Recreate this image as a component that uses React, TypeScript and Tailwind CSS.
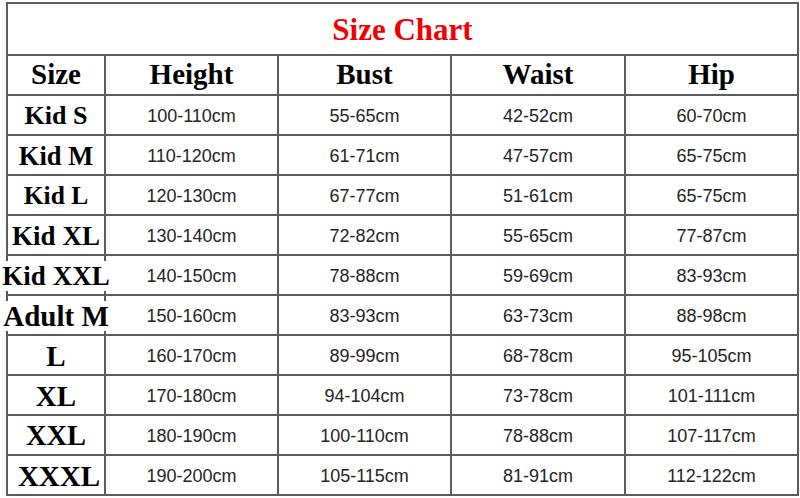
import React from 'react';

type Row = {
    size: string;
    sizeClass: string;
    height: string;
    bust: string;
    waist: string;
    hip: string;
};

const rows: Row[] = [
    { size: 'Kid S', sizeClass: 'text-[26px]', height: '100-110cm', bust: '55-65cm', waist: '42-52cm', hip: '60-70cm' },
    { size: 'Kid M', sizeClass: 'text-[26.5px]', height: '110-120cm', bust: '61-71cm', waist: '47-57cm', hip: '65-75cm' },
    { size: 'Kid L', sizeClass: 'text-[25.5px]', height: '120-130cm', bust: '67-77cm', waist: '51-61cm', hip: '65-75cm' },
    { size: 'Kid XL', sizeClass: 'text-[27px]', height: '130-140cm', bust: '72-82cm', waist: '55-65cm', hip: '77-87cm' },
    { size: 'Kid XXL', sizeClass: 'text-[27px]', height: '140-150cm', bust: '78-88cm', waist: '59-69cm', hip: '83-93cm' },
    { size: 'Adult M', sizeClass: 'text-[29px]', height: '150-160cm', bust: '83-93cm', waist: '63-73cm', hip: '88-98cm' },
    { size: 'L', sizeClass: 'text-[29px]', height: '160-170cm', bust: '89-99cm', waist: '68-78cm', hip: '95-105cm' },
    { size: 'XL', sizeClass: 'text-[29px]', height: '170-180cm', bust: '94-104cm', waist: '73-78cm', hip: '101-111cm' },
    { size: 'XXL', sizeClass: 'text-[28.5px]', height: '180-190cm', bust: '100-110cm', waist: '78-88cm', hip: '107-117cm' },
    { size: 'XXXL', sizeClass: 'text-[29px] pl-[6px]', height: '190-200cm', bust: '105-115cm', waist: '81-91cm', hip: '112-122cm' },
];

const serif = "font-['Liberation_Serif','Times_New_Roman',serif] font-bold";
const sans = "font-['Liberation_Sans',Arial,sans-serif]";

function DataCell({ value }: { value: string }) {
    return (
        <div className={`bg-white flex items-center justify-center pt-[3px] text-[18px] text-[#242424] ${sans}`}>
            {value}
        </div>
    );
}

export default function App() {
    return (
        <div className="w-[800px] h-[498px] bg-white pt-[2px] pl-[6px]">
            <div className="grid w-[793px] grid-cols-[96px_171px_171px_172px_171px] grid-rows-[50px_repeat(11,38px)] gap-[2px] p-[2px] bg-[#5c5c5c]">
                <div className={`col-span-5 bg-white flex items-center justify-center text-[31px] text-[#f00000] pt-[2px] ${serif}`}>
                    Size Chart
                </div>

                {['Size', 'Height', 'Bust', 'Waist', 'Hip'].map(h => (
                    <div key={h} className={`bg-white flex items-center justify-center text-[29px] text-black ${serif}`}>
                        {h}
                    </div>
                ))}

                {rows.map(r => (
                    <React.Fragment key={r.size}>
                        <div className="bg-white flex items-center justify-center pt-[1px]">
                            <span className={`relative z-10 bg-white whitespace-nowrap leading-[30px] text-black ${serif} ${r.sizeClass}`}>
                                {r.size}
                            </span>
                        </div>
                        <DataCell value={r.height} />
                        <DataCell value={r.bust} />
                        <DataCell value={r.waist} />
                        <DataCell value={r.hip} />
                    </React.Fragment>
                ))}
            </div>
        </div>
    );
}
